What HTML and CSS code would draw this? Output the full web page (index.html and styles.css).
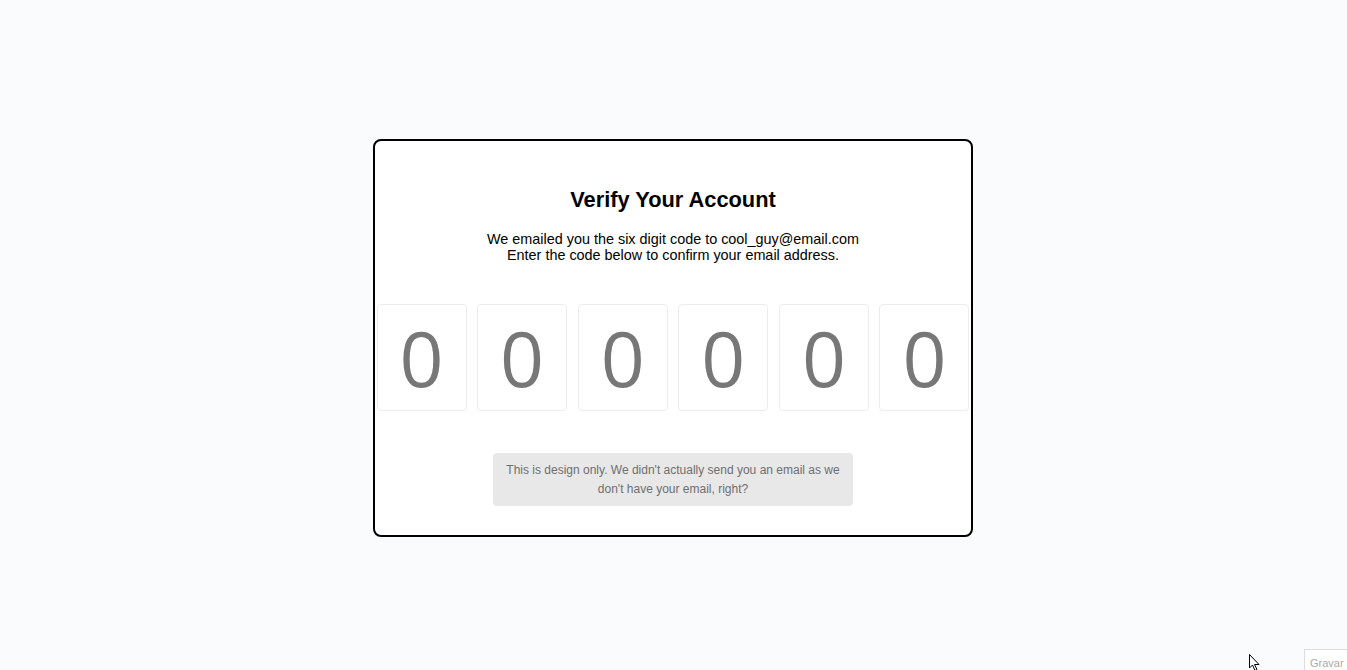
FILE: index.html
```html
<!DOCTYPE html>
<html>
<head>
<meta charset="utf-8">
<link rel="stylesheet" href="styles.css">
</head>
<body>
<div class="card">
  <h2 class="title">Verify Your Account</h2>
  <p class="lead">We emailed you the six digit code to cool_guy@email.com<br>Enter the code below to confirm your email address.</p>
  <div class="code">
    <input class="digit" type="text" value="0">
    <input class="digit" type="text" value="0">
    <input class="digit" type="text" value="0">
    <input class="digit" type="text" value="0">
    <input class="digit" type="text" value="0">
    <input class="digit" type="text" value="0">
  </div>
  <div class="note">This is design only. We didn't actually send you an email as we don't have your email, right?</div>
</div>
<svg class="cursor" width="12" height="17" viewBox="0 0 12 17"><path d="M0.5 0.5 L0.5 14 L3.5 11 L6 16.5 L8 15.5 L5.5 10.5 L10 10.5 Z" fill="#fff" stroke="#000" stroke-width="1"/></svg>
<div class="gravar">Gravar</div>
</body>
</html>
```
FILE: styles.css
```css
html, body {
  margin: 0;
  padding: 0;
}
body {
  background: #fafbfd;
  font-family: "Liberation Sans", Arial, sans-serif;
  height: 670px;
  overflow: hidden;
}
.card {
  box-sizing: border-box;
  width: 600px;
  height: 398px;
  margin: 139px 0 0 373px;
  background: #fff;
  border: 2px solid #000;
  border-radius: 8px;
  padding-top: 46px;
  display: flex;
  flex-direction: column;
  align-items: center;
}
.title {
  margin: 0;
  font-size: 21.8px;
  line-height: 26px;
  font-weight: bold;
  color: #000;
}
.lead {
  margin: 18px 0 0;
  font-size: 14.4px;
  line-height: 16px;
  text-align: center;
  color: #000;
}
.code {
  margin-top: 41px;
  width: 596px;
  display: flex;
  justify-content: center;
}
.digit {
  flex: none;
  box-sizing: border-box;
  width: 90px;
  height: 107px;
  margin: 0 5.3px;
  border: 1px solid #ececec;
  border-radius: 4px;
  background: #fff;
  text-align: center;
  font-family: "Open Sans", sans-serif;
  font-size: 77px;
  color: #777;
  padding: 0;
  outline: none;
}
.note {
  box-sizing: border-box;
  width: 360px;
  margin-top: 42px;
  padding: 8px 10px 7px;
  background: #e8e8e8;
  border-radius: 4px;
  font-size: 12px;
  line-height: 19px;
  color: #6f6f6f;
  text-align: center;
}
.cursor {
  position: absolute;
  left: 1249px;
  top: 654px;
}
.gravar {
  position: absolute;
  left: 1304px;
  top: 649px;
  width: 50px;
  height: 25px;
  box-sizing: border-box;
  border: 1px solid #ddd;
  background: #fff;
  padding: 7px 0 0 5px;
  font-size: 11px;
  color: #aaa;
}
```
